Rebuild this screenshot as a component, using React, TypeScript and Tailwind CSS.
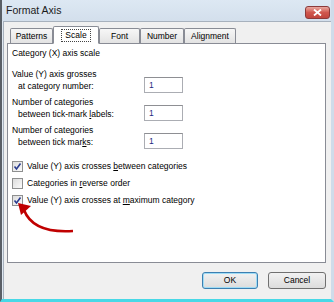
import React from "react";

const font = "font-['Liberation_Sans','Arial',sans-serif]";

function Tab({ label, active, w }: { label: React.ReactNode; active?: boolean; w: string }) {
  if (active) {
    return (
      <div
        className={`${w} h-[18px] -mb-px relative z-10 flex items-center justify-center bg-white border border-[#898c95] border-b-white rounded-t-[2px]`}
      >
        <span className="px-[3px] leading-[11px] outline outline-1 outline-dotted outline-[#444]">{label}</span>
      </div>
    );
  }
  return (
    <div
      className={`${w} h-[15px] flex items-center justify-center bg-gradient-to-b from-[#f7f7f7] to-[#e3e3e3] border border-[#898c95] border-b-0 rounded-t-[2px]`}
    >
      {label}
    </div>
  );
}

function Field({ l1, l2 }: { l1: React.ReactNode; l2: React.ReactNode }) {
  return (
    <div className="flex items-end h-[24px]">
      <div className="w-[132px] leading-[12px]">
        <div>{l1}</div>
        <div className="pl-[6px]">{l2}</div>
      </div>
      <div className="w-[39px] h-[16px] border border-[#abadb3] border-t-[#8e8f93] bg-white pl-[4px] leading-[14px] text-[#1b2a80] -mb-[1px]">
        1
      </div>
    </div>
  );
}

function Check({ checked, children }: { checked?: boolean; children: React.ReactNode }) {
  return (
    <div className="flex items-center gap-[4px] h-[16px]">
      <div className="w-[11px] h-[11px] border border-[#8e8f8f] bg-gradient-to-br from-[#dcdcdc] to-[#fbfbfb] flex items-center justify-center">
        {checked && (
          <svg width="9" height="9" viewBox="0 0 9 9">
            <path d="M1.5 4.5 L3.5 7 L7.5 1.5" fill="none" stroke="#2a3c8f" strokeWidth="1.6" />
          </svg>
        )}
      </div>
      <span>{children}</span>
    </div>
  );
}

export default function App() {
  return (
    <div className={`w-[334px] h-[302px] ${font} text-[8.5px] text-black bg-[#dfe8f2] flex flex-col border-l-2 border-l-[#5a5f66] border-r-[3px] border-r-[#cfdcea] border-b-[3px] border-b-[#48d8e6]`}>
      {/* title bar */}
      <div className="h-[21px] shrink-0 flex items-center justify-between pl-[4px] pr-[1px] bg-gradient-to-b from-[#dde8f3] to-[#d3dfec]">
        <span className="text-[10.5px] text-[#1b1b1b]">Format Axis</span>
        <div className="w-[25px] h-[13px] mt-[4px] rounded-[3px] border border-[#8b3a3a] bg-gradient-to-b from-[#e8a7a0] via-[#d0574e] to-[#c0453d] flex items-center justify-center">
          <svg width="9" height="7" viewBox="0 0 9 7">
            <path d="M1 0.5 L8 6.5 M8 0.5 L1 6.5" stroke="#fff" strokeWidth="1.8" />
          </svg>
        </div>
      </div>

      {/* body */}
      <div className="flex-1 min-h-0 ml-[1px] bg-[#f0f0f0] border-l border-t border-[#a7b1bd] flex flex-col pl-[3px] pr-[5px]">
        <div className="h-[21px] shrink-0 flex items-end pl-[3px]">
          <Tab label="Patterns" w="w-[43px]" />
          <Tab label="Scale" active w="w-[46px]" />
          <Tab label="Font" w="w-[41px]" />
          <Tab label="Number" w="w-[44px]" />
          <Tab label="Alignment" w="w-[52px]" />
        </div>
        <div className="relative h-[220px] shrink-0 bg-white border border-[#898c95] pl-[4px] pt-[3px]">
          <div className="leading-[12px]">Category (X) axis scale</div>
          <div className="mt-[9px] flex flex-col gap-[4px]">
            <Field l1="Value (Y) axis grosses" l2="at category number:" />
            <Field
              l1="Number of categories"
              l2={
                <>
                  between tick-mark <u>l</u>abels:
                </>
              }
            />
            <Field
              l1="Number of categories"
              l2={
                <>
                  between tick mar<u>k</u>s:
                </>
              }
            />
          </div>
          <div className="mt-[10px] flex flex-col gap-[1px]">
            <Check checked>
              Value (Y) axis crosses <u>b</u>etween categories
            </Check>
            <Check>
              Categories in <u>r</u>everse order
            </Check>
            <Check checked>
              Value (Y) axis crosses at <u>m</u>aximum category
            </Check>
          </div>
          <svg className="absolute" width="90" height="60" viewBox="0 0 90 60" style={{ left: 0, top: 150 }}>
            <path d="M16 16 C 21 29, 35 39, 65 37" fill="none" stroke="#c00000" strokeWidth="2.6" />
            <path d="M10 9 L23 12 L13 21 Z" fill="#c00000" />
          </svg>
        </div>
        <div className="flex-1 flex items-center justify-end gap-[10px] pb-[2px]">
          <button className="w-[56px] h-[17px] rounded-[3px] border border-[#3c7fb1] bg-gradient-to-b from-[#f2f2f2] to-[#dcdcdc] shadow-[inset_0_0_0_1px_#9fdcf5] leading-none">
            OK
          </button>
          <button className="w-[58px] h-[17px] rounded-[3px] border border-[#707070] bg-gradient-to-b from-[#f2f2f2] to-[#dcdcdc] leading-none">
            Cancel
          </button>
        </div>
      </div>
    </div>
  );
}
